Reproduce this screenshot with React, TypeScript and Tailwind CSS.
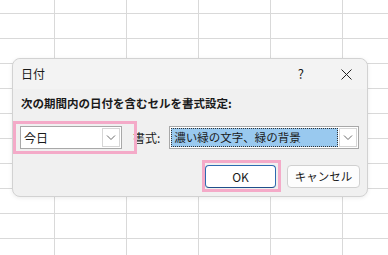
import React from 'react';

const font = { fontFamily: '"Noto Sans CJK JP", "Noto Sans", sans-serif' };

const Chevron = () => (
  <svg width="10" height="6" viewBox="0 0 10 6" fill="none">
    <path d="M1 0.5 L5 4.5 L9 0.5" stroke="#6b6b6b" strokeWidth="1" />
  </svg>
);

const DropButton = () => (
  <div className="w-[18px] h-[19px] bg-white border border-[#d6d6d6] flex items-center justify-center">
    <Chevron />
  </div>
);

const App: React.FC = () => {
  return (
    <div
      className="relative w-[388px] h-[255px] overflow-hidden bg-white bg-[linear-gradient(to_right,#d9d9d9_1px,transparent_1px),linear-gradient(to_bottom,#d9d9d9_1px,transparent_1px)] bg-[size:72px_25px] bg-[position:54px_13px]"
      style={font}
    >
      <div className="absolute left-[12px] top-[58px] w-[356px] h-[139px] bg-[#f0f0f0] border border-[#d2d2d2] rounded-[8px] shadow-[0_1px_4px_rgba(0,0,0,0.08)] text-[#1a1a1a]">
        {/* title bar */}
        <div className="h-[30px] flex items-center pl-[8px] pr-[15px] bg-[#f3f3f3] rounded-t-[8px]">
          <span className="text-[12px]">日付</span>
          <span className="ml-auto text-[13px] mr-[37px]">?</span>
          <svg width="11" height="11" viewBox="0 0 11 11">
            <path d="M0.5 0.5 L10.5 10.5 M10.5 0.5 L0.5 10.5" stroke="#222" strokeWidth="1" />
          </svg>
        </div>

        <div className="px-[7px]">
          <div className="mt-[7px] h-[16px] flex items-center text-[11.5px] font-bold pl-[1px]">
            次の期間内の日付を含むセルを書式設定:
          </div>

          <div className="mt-[14px] h-[23px] flex items-center">
            <div className="w-[102px] h-[23px] bg-white border border-[#a8a8a8] flex items-center pl-[3px] pr-[1px]">
              <span className="text-[12px]">今日</span>
              <div className="ml-auto"><DropButton /></div>
            </div>
            <span className="ml-[11px] text-[12px]">書式:</span>
            <div className="ml-[9px] w-[190px] h-[23px] bg-white border border-[#a8a8a8] flex items-center pl-[1px] pr-[1px]">
              <div className="flex-1 h-[19px] bg-[#99c9ef] border border-dotted border-[#333] flex items-center pl-[2px] text-[11.5px] mr-[1px]">
                濃い緑の文字、緑の背景
              </div>
              <DropButton />
            </div>
          </div>

          <div className="mt-[16px] flex justify-end gap-[11px]">
            <button className="w-[71px] h-[23px] bg-white border border-[#2d6ab0] border-b-[#1f4f8a] rounded-[4px] text-[12px] flex items-center justify-center">
              OK
            </button>
            <button className="w-[73px] h-[23px] bg-[#fdfdfd] border border-[#d0d0d0] rounded-[4px] text-[11.5px] flex items-center justify-center">
              キャンセル
            </button>
          </div>
        </div>

        {/* pink highlights */}
        <div className="absolute left-[0px] top-[62px] w-[124px] h-[33px] border-[3px] border-[#f4aac8]" />
        <div className="absolute left-[189px] top-[101px] w-[79px] h-[32px] border-[3px] border-[#f4aac8]" />
      </div>
    </div>
  );
};

export default App;
